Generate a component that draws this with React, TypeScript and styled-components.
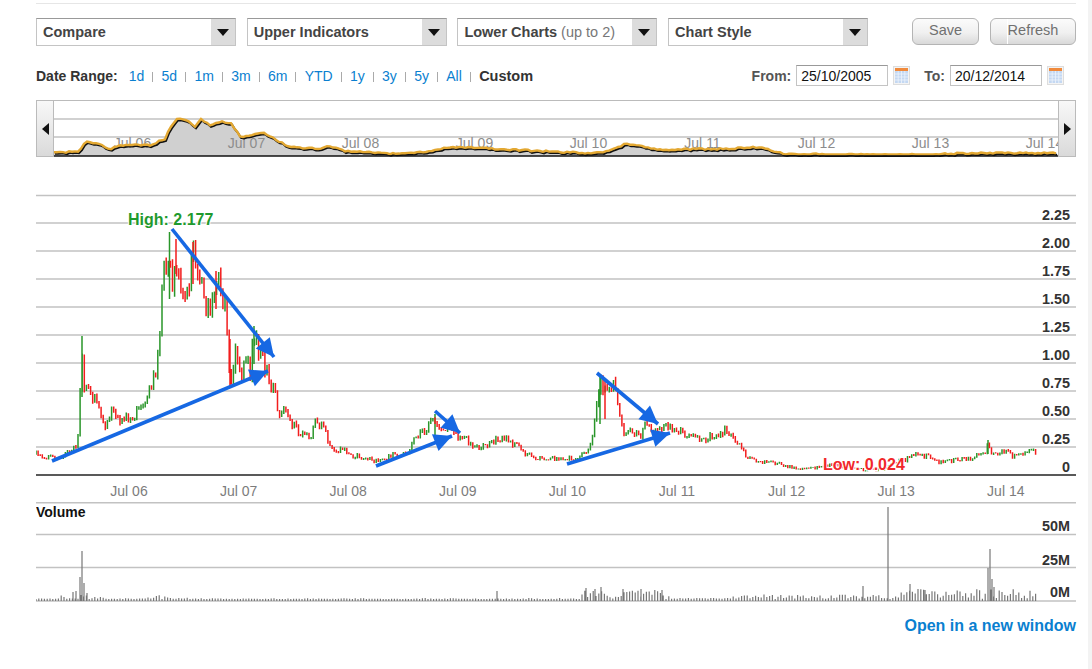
import React, { FC, ReactElement } from 'react';
import styled, { createGlobalStyle } from 'styled-components';

const GlobalStyle = createGlobalStyle`
    html, body {
        margin: 0;
        background-color: #f3f3f3;
        font-family: "Liberation Sans", Arial, sans-serif;
    }
`;

const Page = styled.div`
    width: 1088px;
    height: 669px;
    box-sizing: border-box;
    padding: 3px 12px 0 36px;
    background-color: white;
    overflow: hidden;
`;

const TopRule = styled.div`
    height: 1px;
    background-color: #e6e6e6;
`;

const Toolbar = styled.div`
    display: flex;
    gap: 10.7px;
    margin-top: 14px;
`;

const Select = styled.div`
    display: flex;
    justify-content: space-between;
    width: 200px;
    height: 28px;
    box-sizing: border-box;
    border: 1px solid #c4c4c4;
    border-top: 1px solid #999;
    background-color: white;
`;

const SelectLabel = styled.span`
    padding-left: 6px;
    font-size: 14.5px;
    font-weight: bold;
    line-height: 26px;
    color: #444;

    small {
        font-size: 14.5px;
        font-weight: normal;
        color: #777;
    }
`;

const SelectArrow = styled.span`
    display: flex;
    align-items: center;
    justify-content: center;
    width: 24px;
    background-color: #dcdcdc;

    &::after {
        content: '';
        border-top: 7px solid #111;
        border-left: 6px solid transparent;
        border-right: 6px solid transparent;
    }
`;

const ButtonGroup = styled.div`
    display: flex;
    gap: 11px;
    margin-left: auto;
`;

const Button = styled.button<{ $width: number; $seam?: boolean }>`
    position: relative;
    width: ${({ $width }): number => $width}px;
    height: 27px;
    padding: 0 0 3px;
    border: 1px solid #b4b4b4;
    border-radius: 6px;
    background: linear-gradient(#fbfbfb, #f0f0f0 55%, #d9d9d9);
    font-family: inherit;
    font-size: 14.5px;
    color: #707070;

    &::after {
        content: '';
        display: ${({ $seam }): string => ($seam ? 'block' : 'none')};
        position: absolute;
        top: 0;
        bottom: 0;
        left: 16px;
        width: 1px;
        background-color: white;
    }
`;

const DateRow = styled.div`
    display: flex;
    align-items: center;
    height: 21px;
    margin-top: 19px;
    font-size: 14px;
`;

const BoldLabel = styled.span`
    font-weight: bold;
    color: #333;
`;

const CustomLabel = styled(BoldLabel)`
    font-size: 14.5px;
`;

const RangeLinks = styled.div`
    display: flex;
    align-items: center;
    margin-left: 11px;
`;

const RangeLink = styled.a`
    color: #0a7fd0;
`;

const Separator = styled.span`
    width: 1px;
    height: 10px;
    margin: 2px 8.3px 0 8px;
    background-color: #aaa;
`;

const DateFields = styled.div`
    display: flex;
    align-items: center;
    margin-left: auto;
    margin-right: 12px;
`;

const FieldLabel = styled.span`
    margin-left: 14px;
    font-weight: bold;
    color: #555;
`;

const DateInput = styled.div`
    width: 92px;
    height: 21px;
    box-sizing: border-box;
    margin-left: 5px;
    padding-left: 4px;
    border: 1px solid #c4c4c4;
    border-top-color: #999;
    font-size: 14px;
    line-height: 20px;
    color: #111;
`;

const CalendarIcon = styled.svg`
    margin-left: 5px;
`;

const Navigator = styled.div`
    display: flex;
    height: 57px;
    box-sizing: border-box;
    margin-top: 14px;
    border-top: 1px solid #bbb;
`;

const NavButton = styled.div<{ $side: 'left' | 'right' }>`
    display: flex;
    align-items: center;
    justify-content: center;
    flex: none;
    width: 18px;
    box-sizing: border-box;
    border: solid #bbb;
    border-width: 0 1px 1px 1px;
    background: linear-gradient(#f8f8f8, #dadada);

    &::after {
        content: '';
        border-top: 6px solid transparent;
        border-bottom: 6px solid transparent;
        ${({ $side }): string => ($side === 'left' ? 'border-right: 7px solid #111;' : 'border-left: 7px solid #111;')}
    }
`;

const NavChart = styled.svg`
    display: block;
    flex: 1;
    height: 56px;
`;

const Chart = styled.svg`
    display: block;
    margin-top: 32px;
`;

const VolumeChart = styled.svg`
    display: block;
`;

const GridLine = styled.line<{ $strong?: boolean }>`
    stroke: ${({ $strong }): string => ($strong ? '#222' : '#c2c2c2')};
    stroke-width: 1.4;
`;

const AxisLabel = styled.text`
    font-size: 14px;
    fill: #7c7c7c;
    text-anchor: middle;
`;

const NavLabel = styled(AxisLabel)`
    fill: #8c8c8c;
`;

const ValueLabel = styled.text`
    font-size: 14.4px;
    font-weight: bold;
    fill: #333;
    text-anchor: end;
`;

const VolumeTitle = styled.text`
    font-size: 14px;
    font-weight: bold;
    fill: #111;
`;

const Extreme = styled.text<{ $colour: string }>`
    font-size: 16px;
    font-weight: bold;
    fill: ${({ $colour }): string => $colour};
    stroke: white;
    stroke-width: 2px;
    paint-order: stroke;
`;

const LinkRow = styled.div`
    margin-top: 12px;
    text-align: right;
`;

const NewWindowLink = styled.a`
    font-size: 16px;
    font-weight: bold;
    line-height: 18px;
    color: #0a7fd0;
`;

type Point = [number, number];

const PRICE: Point[] = [
    [36, 455], [50, 457], [60, 459], [66, 453], [75, 450], [78, 435], [80, 395], [82, 345], [84, 385], [90, 395],
    [95, 402], [100, 415], [105, 434], [110, 412], [118, 418], [125, 421], [135, 415], [140, 410], [145, 405],
    [150, 385], [155, 375], [160, 340], [162, 285], [165, 270], [170, 245], [172, 285], [176, 255], [180, 300],
    [185, 295], [190, 270], [193, 255], [198, 280], [205, 305], [210, 312], [215, 275], [220, 278], [225, 310],
    [230, 386], [236, 350], [240, 378], [245, 360], [250, 372], [254, 335], [258, 350], [265, 370], [270, 385],
    [275, 395], [280, 424], [283, 405], [290, 420], [300, 435], [310, 440], [315, 420], [322, 425], [330, 445],
    [340, 452], [345, 448], [350, 455], [365, 460], [380, 462], [395, 455], [405, 455], [415, 440], [420, 432],
    [425, 430], [435, 418], [440, 428], [450, 432], [465, 440], [475, 447], [485, 445], [495, 442], [505, 437],
    [515, 445], [525, 455], [535, 458], [555, 460], [565, 458], [575, 460], [585, 455], [590, 445], [595, 420],
    [600, 385], [605, 390], [610, 395], [615, 385], [620, 420], [625, 440], [630, 428], [640, 440], [645, 422],
    [655, 430], [665, 426], [675, 432], [690, 435], [700, 442], [710, 437], [725, 431], [735, 440], [745, 455],
    [755, 462], [775, 464], [795, 469], [815, 468], [835, 466], [850, 470], [880, 471], [900, 462], [920, 455],
    [930, 458], [940, 463], [950, 462], [965, 459], [985, 456], [988, 445], [992, 454], [1005, 452], [1015, 458],
    [1025, 451], [1030, 453], [1036, 452],
];

// tall single bars that the sampled series would otherwise miss
const UP_WICKS = 'M82 337V398M169.5 233V300M254 327V365M435 415V440M600 377V425M988 441V455';
const DOWN_WICKS = 'M193 243V285M176 240V275M216 272V310M230 340V387M605 380V420';

const OVERVIEW: Point[] = [
    [54, 154], [80, 152], [85, 142], [100, 145], [110, 150], [120, 146], [150, 146], [165, 140], [172, 125],
    [178, 119], [190, 123], [195, 128], [200, 120], [210, 126], [222, 123], [232, 125], [240, 138], [255, 135],
    [263, 134], [290, 148], [320, 150], [330, 147], [345, 152], [400, 155], [430, 152], [450, 148], [500, 150],
    [560, 153], [590, 154], [610, 152], [625, 145], [640, 147], [660, 151], [700, 150], [720, 150], [760, 148],
    [785, 155], [900, 156], [980, 154], [1058, 154],
];

const ARROWS: [number, number, number, number][] = [
    [52, 462, 268, 372],
    [172, 230, 274, 358],
    [376, 467, 452, 437],
    [435, 412, 460, 434],
    [567, 465, 670, 434],
    [597, 374, 658, 425],
];

const VOLUME_SPIKES: Point[] = [
    [82, 50], [80, 24], [84, 18], [87, 8], [76, 10], [73, 9], [497, 10], [586, 13], [595, 12], [601, 14], [623, 12],
    [641, 12], [662, 11], [863, 15], [888, 94], [910, 17], [918, 12], [925, 11], [988, 33], [990, 52], [992, 22],
    [994, 14], [1002, 9],
];

const seeded = (seed: number) => (): number => {
    seed = (seed * 16807) % 2147483647;
    return (seed - 1) / 2147483646;
};

const interpolate = (points: Point[], x: number): number => {
    const i = points.findIndex(([px]) => px >= x);
    if (i <= 0) return points[0][1];
    const [x0, y0] = points[i - 1];
    const [x1, y1] = points[i];
    return y0 + ((y1 - y0) * (x - x0)) / (x1 - x0);
};

const buildCandles = (): { up: string; down: string } => {
    const random = seeded(4242);
    let up = UP_WICKS;
    let down = DOWN_WICKS;
    let previous = PRICE[0][1];
    for (let x = 36; x <= 1036; x += 2.1) {
        const target = interpolate(PRICE, x);
        const level = 476 - target;
        const close = target + (random() - 0.5) * (level * 0.14 + 3);
        const top = Math.min(previous, close) - random() * level * 0.04;
        const bottom = Math.max(previous, close) + random() * level * 0.04 + 0.6;
        const bar = `M${x.toFixed(1)} ${top.toFixed(1)}V${bottom.toFixed(1)}`;
        if (close < previous) up += bar;
        else down += bar;
        previous = close;
    }
    return { up, down };
};

const buildVolume = (): string => {
    const random = seeded(99);
    let d = '';
    for (let x = 36; x <= 1036; x += 2.8) {
        let peak = 1.2;
        if (x > 60 && x < 105) peak = 6;
        else if (x > 140 && x < 190) peak = 4;
        else if (x > 580 && x < 670) peak = 9;
        else if (x > 720 && x < 880) peak = 4.5;
        else if (x > 895) peak = 10;
        const height = 2 + random() * peak * (x > 580 ? 1 : random());
        d += `M${x.toFixed(1)} 602V${(602 - height).toFixed(1)}`;
    }
    VOLUME_SPIKES.forEach(([x, height]) => {
        d += `M${x} 602V${602 - height}`;
    });
    return d;
};

const buildOverview = (): Point[] => {
    const random = seeded(777);
    const points: Point[] = [];
    for (let x = 54; x <= 1058; x += 3) {
        const y = interpolate(OVERVIEW, x);
        points.push([x, Math.min(155.5, y + (random() - 0.5) * 1.6)]);
    }
    return points;
};

const arrowHead = (x0: number, y0: number, x1: number, y1: number): string => {
    const angle = Math.atan2(y1 - y0, x1 - x0);
    const point = (back: number, side: number): string =>
        `${x1 - back * Math.cos(angle) - side * Math.sin(angle)},${y1 - back * Math.sin(angle) + side * Math.cos(angle)}`;
    return `${x1},${y1} ${point(18, 9)} ${point(18, -9)}`;
};

const toLine = (points: Point[], dx = 0, dy = 0): string =>
    points.map(([x, y], i) => `${i ? 'L' : 'M'}${x + dx} ${y + dy}`).join('');

const candles = buildCandles();
const volume = buildVolume();
const overview = buildOverview();

const RANGES = ['1d', '5d', '1m', '3m', '6m', 'YTD', '1y', '3y', '5y', 'All'];
const YEARS = ['06', '07', '08', '09', '10', '11', '12', '13', '14'];
const PRICES = ['2.25', '2.00', '1.75', '1.50', '1.25', '1.00', '0.75', '0.50', '0.25', '0'];

const Calendar: FC = (): ReactElement => (
    <CalendarIcon width="17" height="19" viewBox="0 0 17 19">
        <rect x="0.5" y="0.5" width="16" height="18" fill="#f4f4f4" stroke="#ddd" />
        <rect x="2" y="2" width="13" height="3" fill="#f08a3c" />
        <rect x="2" y="5" width="13" height="12" fill="#c4d8f2" />
        <path d="M2 8h13M2 11h13M2 14h13M5.2 5v12M8.5 5v12M11.8 5v12" stroke="#eef4fb" strokeWidth="0.8" />
    </CalendarIcon>
);

const App: FC = (): ReactElement => (
    <Page>
        <GlobalStyle />
        <TopRule />
        <Toolbar>
            <Select>
                <SelectLabel>Compare</SelectLabel>
                <SelectArrow />
            </Select>
            <Select>
                <SelectLabel>Upper Indicators</SelectLabel>
                <SelectArrow />
            </Select>
            <Select>
                <SelectLabel>
                    Lower Charts <small>(up to 2)</small>
                </SelectLabel>
                <SelectArrow />
            </Select>
            <Select>
                <SelectLabel>Chart Style</SelectLabel>
                <SelectArrow />
            </Select>
            <ButtonGroup>
                <Button $width={67}>Save</Button>
                <Button $width={86} $seam>
                    Refresh
                </Button>
            </ButtonGroup>
        </Toolbar>
        <DateRow>
            <BoldLabel>Date Range:</BoldLabel>
            <RangeLinks>
                {RANGES.map((range) => (
                    <React.Fragment key={range}>
                        <RangeLink>{range}</RangeLink>
                        <Separator />
                    </React.Fragment>
                ))}
                <CustomLabel>Custom</CustomLabel>
            </RangeLinks>
            <DateFields>
                <FieldLabel>From:</FieldLabel>
                <DateInput>25/10/2005</DateInput>
                <Calendar />
                <FieldLabel>To:</FieldLabel>
                <DateInput>20/12/2014</DateInput>
                <Calendar />
            </DateFields>
        </DateRow>
        <Navigator>
            <NavButton $side="left" />
            <NavChart viewBox="54 102 1004 56">
                <GridLine x1="54" x2="1058" y1="120" y2="120" />
                <GridLine x1="54" x2="1058" y1="138" y2="138" />
                <path d={`${toLine(overview)}L1058 157L54 157Z`} fill="#d0d0d0" />
                {YEARS.map((year, i) => (
                    <NavLabel key={year} x={132.5 + i * 114} y="149">
                        Jul {year}
                    </NavLabel>
                ))}
                <path d={toLine(overview, 1, 1.5)} fill="none" stroke="#111" strokeWidth="2" />
                <path d={toLine(overview)} fill="none" stroke="#e3a832" strokeWidth="2.4" />
                <path d="M54 157H1058" stroke="#111" strokeWidth="1.5" />
            </NavChart>
            <NavButton $side="right" />
        </Navigator>
        <Chart width="1040" height="313" viewBox="36 190 1040 313">
            {PRICES.map((price, i) => (
                <GridLine key={price} x1="36" x2="1076" y1={224 + i * 28} y2={224 + i * 28} $strong={price === '0'} />
            ))}
            <GridLine x1="36" x2="1076" y1="196.5" y2="196.5" />
            {PRICES.map((price, i) => (
                <ValueLabel key={price} x="1070" y={221 + i * 28}>
                    {price}
                </ValueLabel>
            ))}
            {YEARS.map((year, i) => (
                <AxisLabel key={year} x={129 + i * 109.6} y="497">
                    Jul {year}
                </AxisLabel>
            ))}
            <path d={candles.up} stroke="#2a962a" strokeWidth="1.5" fill="none" />
            <path d={candles.down} stroke="#f21d1d" strokeWidth="1.5" fill="none" />
            <Extreme $colour="#1f9a2e" x="128" y="226">
                High: 2.177
            </Extreme>
            <Extreme $colour="#f1272b" x="823" y="471">
                Low: 0.024
            </Extreme>
            {ARROWS.map(([x0, y0, x1, y1]) => (
                <g key={`${x0}-${y0}`}>
                    <line x1={x0} y1={y0} x2={x1} y2={y1} stroke="#1668e3" strokeWidth="3.6" />
                    <polygon points={arrowHead(x0, y0, x1, y1)} fill="#1668e3" />
                </g>
            ))}
        </Chart>
        <VolumeChart width="1040" height="103" viewBox="36 503 1040 103">
            <GridLine x1="36" x2="1076" y1="503.7" y2="503.7" />
            <GridLine x1="36" x2="1076" y1="535.5" y2="535.5" />
            <GridLine x1="36" x2="1076" y1="568.5" y2="568.5" />
            <GridLine x1="36" x2="1076" y1="602" y2="602" />
            <VolumeTitle x="36" y="518">
                Volume
            </VolumeTitle>
            <path d={volume} stroke="#777" strokeWidth="1.2" fill="none" />
            <ValueLabel x="1070" y="532">
                50M
            </ValueLabel>
            <ValueLabel x="1070" y="566">
                25M
            </ValueLabel>
            <ValueLabel x="1070" y="598">
                0M
            </ValueLabel>
        </VolumeChart>
        <LinkRow>
            <NewWindowLink>Open in a new window</NewWindowLink>
        </LinkRow>
    </Page>
);

export default App;
